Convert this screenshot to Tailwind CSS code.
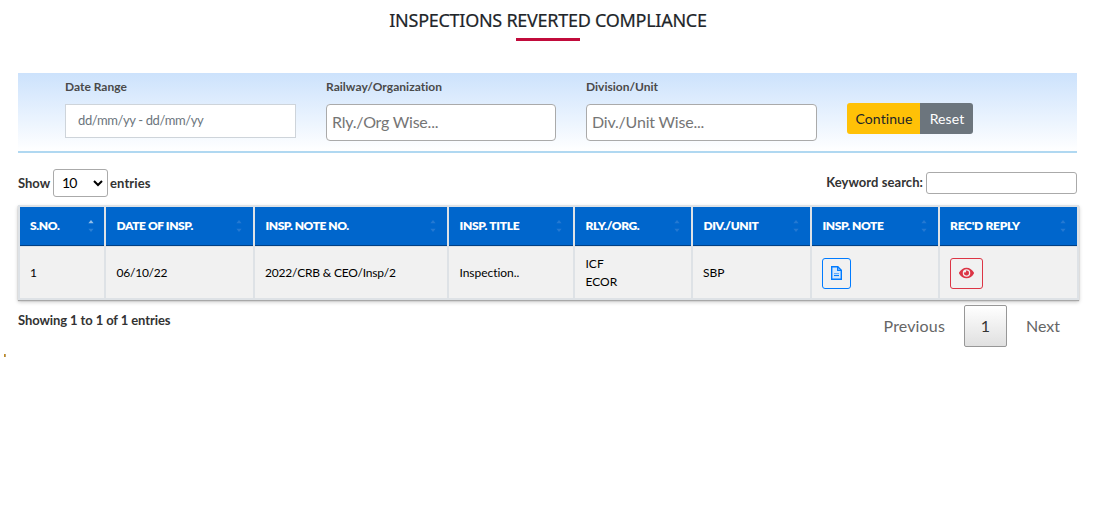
<!DOCTYPE html>
<html lang="en">
<head>
<meta charset="utf-8">
<title>Inspections Reverted Compliance</title>
<script src="https://cdn.jsdelivr.net/npm/@tailwindcss/browser@4"></script>
</head>
<body class="bg-white font-['Lato',sans-serif] text-[#333] h-[508px] overflow-hidden">
<svg class="hidden">
  <symbol id="sort" viewBox="0 0 6 14"><path d="M3 1 5.6 4.2H.4z"/><path d="M3 13 .4 9.800h5.2z"/></symbol>
</svg>
<header class="flex flex-col items-center pt-[9px] h-[73px]">
  <h1 class="font-['Noto_Sans',sans-serif] font-normal text-[18px] leading-[23px] tracking-[-0.27px] text-[#212529] [-webkit-text-stroke:0.2px_#212529] whitespace-nowrap">INSPECTIONS REVERTED COMPLIANCE</h1>
  <div class="w-16 h-[3px] mt-[6px] bg-[#c10b3b]"></div>
</header>
<main class="ml-[18px] w-[1061px]">
  <form class="flex w-[1059px] h-20 pl-[47px] pt-[5px] border-b-2 border-[#b0d8f1] bg-linear-to-b from-[#cce2fc] to-white">
    <div class="w-[231px] mr-[30px]">
      <label class="block text-[12px] leading-[18px] font-bold text-[#4a4a4a] h-[26px]">Date Range</label>
      <input class="block w-[231px] h-[34px] border border-[#ced4da] bg-white px-3 pb-[3px] text-[13px] tracking-[-0.38px] placeholder:text-[#6c757d]" placeholder="dd/mm/yy - dd/mm/yy">
    </div>
    <div class="w-[230px] mr-[30px]">
      <label class="block text-[12px] leading-[18px] font-bold text-[#4a4a4a] h-[26px] tracking-[0.03px]">Railway/Organization</label>
      <input class="block w-[230px] h-[37px] border border-[#aaa] rounded-[4px] bg-white px-[5px] pb-[2px] text-[16px] tracking-[-0.22px] placeholder:text-[#757575]" placeholder="Rly./Org Wise...">
    </div>
    <div class="w-[231px] mr-[30px]">
      <label class="block text-[12px] leading-[18px] font-bold text-[#4a4a4a] h-[26px]">Division/Unit</label>
      <input class="block w-[231px] h-[37px] border border-[#aaa] rounded-[4px] bg-white px-[5px] pb-[2px] text-[16px] tracking-[-0.2px] placeholder:text-[#757575]" placeholder="Div./Unit Wise...">
    </div>
    <div class="flex mt-[25px] h-[31px] text-[14px]">
      <button type="button" class="w-[73px] pl-px rounded-l-[3px] bg-[#ffc107] text-[#212529] tracking-[0.08px]">Continue</button>
      <button type="button" class="w-[53px] pl-px rounded-r-[3px] bg-[#6c757d] text-white tracking-[0.1px]">Reset</button>
    </div>
  </form>
  <div class="flex justify-between w-[1059px] h-[52px] pt-4 text-[13px] font-bold leading-7">
    <div class="flex"><span class="w-[35px]">Show</span>
      <div class="flex items-center justify-between w-[55px] h-7 border border-[#aaa] rounded-[3px] pl-2 pr-1 mr-[2px] text-[14px] font-normal text-black tracking-[-0.8px]">10
        <svg class="w-[10px] h-[7px]" viewBox="0 0 10 7" fill="none" stroke="currentColor" stroke-width="2"><path d="m1 1 4 4 4-4"/></svg>
      </div><span class="tracking-[0.1px]">entries</span></div>
    <div class="flex"><span class="leading-[26px] mr-[3px] tracking-[0.06px]">Keyword search:</span><input class="w-[151px] h-[22px] mt-[3px] border border-[#aaa] rounded-[3px]"></div>
  </div>
  <div class="grid grid-cols-[84px_147px_192px_124px_116px_117px_126px_137px] gap-x-[2px] p-[2px] h-[95px] grid-rows-[39px_1px_51px] bg-[#dee2e6] shadow-[0_1px_1px_#a8a8a8,0_2px_4px_rgba(0,0,0,0.22)] text-[12px]">
    <div class="flex items-center justify-between bg-[#06c] border-b border-[#004085] pl-[10px] pr-[10px] font-extrabold text-white whitespace-nowrap"><span class="tracking-[-0.35px]">S.NO.</span><svg class="w-[6px] h-[14px] shrink-0" viewBox="0 0 6 14"><path fill="#94bfe9" d="M3 1 5.6 4.2H.4z"/><path fill="#2b80d5" d="M3 13 .4 9.800h5.2z"/></svg></div>
    <div class="flex items-center justify-between bg-[#06c] border-b border-[#004085] pl-[10.500px] pr-[11px] font-extrabold text-white whitespace-nowrap"><span class="tracking-[-0.4px]">DATE OF INSP.</span><svg class="w-[6px] h-[14px] shrink-0" viewBox="0 0 6 14" fill="#2479d2"><use href="#sort"/></svg></div>
    <div class="flex items-center justify-between bg-[#06c] border-b border-[#004085] pl-[10.500px] pr-[11px] font-extrabold text-white whitespace-nowrap"><span class="tracking-[-0.45px]">INSP. NOTE NO.</span><svg class="w-[6px] h-[14px] shrink-0" viewBox="0 0 6 14" fill="#2479d2"><use href="#sort"/></svg></div>
    <div class="flex items-center justify-between bg-[#06c] border-b border-[#004085] pl-[10.500px] pr-[11px] font-extrabold text-white whitespace-nowrap"><span class="tracking-[-0.3px]">INSP. TITLE</span><svg class="w-[6px] h-[14px] shrink-0" viewBox="0 0 6 14" fill="#2479d2"><use href="#sort"/></svg></div>
    <div class="flex items-center justify-between bg-[#06c] border-b border-[#004085] pl-[10.500px] pr-[11px] font-extrabold text-white whitespace-nowrap"><span class="tracking-[-0.45px]">RLY./ORG.</span><svg class="w-[6px] h-[14px] shrink-0" viewBox="0 0 6 14" fill="#2479d2"><use href="#sort"/></svg></div>
    <div class="flex items-center justify-between bg-[#06c] border-b border-[#004085] pl-[10.500px] pr-[11px] font-extrabold text-white whitespace-nowrap"><span class="tracking-[-0.4px]">DIV./UNIT</span><svg class="w-[6px] h-[14px] shrink-0" viewBox="0 0 6 14" fill="#2479d2"><use href="#sort"/></svg></div>
    <div class="flex items-center justify-between bg-[#06c] border-b border-[#004085] pl-[10.500px] pr-[11px] font-extrabold text-white whitespace-nowrap"><span class="tracking-[-0.4px]">INSP. NOTE</span><svg class="w-[6px] h-[14px] shrink-0" viewBox="0 0 6 14" fill="#2479d2"><use href="#sort"/></svg></div>
    <div class="flex items-center justify-between bg-[#06c] border-b border-[#004085] pl-[10px] pr-[11px] font-extrabold text-white whitespace-nowrap"><span class="tracking-[-0.25px]">REC'D REPLY</span><svg class="w-[6px] h-[14px] shrink-0" viewBox="0 0 6 14" fill="#2479d2"><use href="#sort"/></svg></div>
    <div class="col-span-8"></div>
    <div class="flex items-center bg-[#f1f1f1] pl-[10px] pt-px text-black">1</div>
    <div class="flex items-center bg-[#f1f1f1] pl-[10.500px] pt-px text-black tracking-[-0.23px]">06/10/22</div>
    <div class="flex items-center bg-[#f1f1f1] pl-[10px] pt-px text-black tracking-[-0.2px]">2022/CRB &amp; CEO/Insp/2</div>
    <div class="flex items-center bg-[#f1f1f1] pl-[10.500px] pt-px text-black tracking-[-0.05px]">Inspection..</div>
    <div class="flex items-center bg-[#f1f1f1] pl-[10.500px] pt-px text-black leading-[18px]">ICF<br>ECOR</div>
    <div class="flex items-center bg-[#f1f1f1] pl-[10px] pt-px text-black">SBP</div>
    <div class="flex items-center bg-[#f1f1f1] pl-[10px] pt-px">
      <button class="flex items-center justify-center w-[29px] h-[31px] border border-[#007bff] rounded-[3px] text-[#007bff]">
        <svg class="w-[11px] h-[14px]" viewBox="0 0 11 14" fill="none" stroke="currentColor"><path d="M.7.7h6.100l3.500 3.500v9.100H.7z" fill="#d4e7fb" stroke-width="1.400"/><path d="M6.700.8v3.600h3.500" stroke-width="1.300"/><path d="M3 7.500h5" stroke-width="1" stroke-opacity=".55"/><path d="M3 9.500h5" stroke-width="1.200"/></svg>
      </button></div>
    <div class="flex items-center bg-[#f1f1f1] pl-[10px] pt-px">
      <button class="flex items-center justify-center w-[33px] h-[31px] border border-[#dc3545] rounded-[3px] text-[#dc3545]">
        <svg class="w-[15px] h-[12px]" viewBox="0 0 576 432" fill="currentColor"><path fill-rule="evenodd" d="M572.500 201.400C518.300 91.600 410.900 12 288 12S57.700 91.600 3.500 201.400a32.400 32.400 0 0 0 0 29.200C57.700 340.400 165.100 420 288 420s230.300-79.600 284.500-189.400a32.400 32.400 0 0 0 0-29.200zM288 360a144 144 0 1 1 0-288 144 144 0 0 1 0 288zm0-240a95 95 0 0 0-25.300 3.800 47.900 47.900 0 0 1-66.900 66.900A96 96 0 1 0 288 120z"/></svg>
      </button></div>
  </div>
  <footer class="flex justify-between w-[1059px] pt-[5px]">
    <div class="text-[13px] font-bold leading-[22px] mt-1 tracking-[-0.1px]">Showing 1 to 1 of 1 entries</div>
    <nav class="flex text-[16px] leading-[42px] text-[#666]">
      <span class="mr-[19px] tracking-[0.15px]">Previous</span>
      <span class="w-[43px] h-[42px] leading-[40px] text-center border border-[#979797] rounded-[2px] bg-linear-to-b from-white to-[#e0e0e0] text-[#333]">1</span>
      <span class="ml-[19px] mr-[17px]">Next</span>
    </nav>
  </footer>
</main>
<div class="flex ml-1 mt-[7px] w-[2px] h-[3px]"><i class="w-px bg-[#c88b18]"></i><i class="w-px bg-[#b5a27e]"></i></div>
</body>
</html>
